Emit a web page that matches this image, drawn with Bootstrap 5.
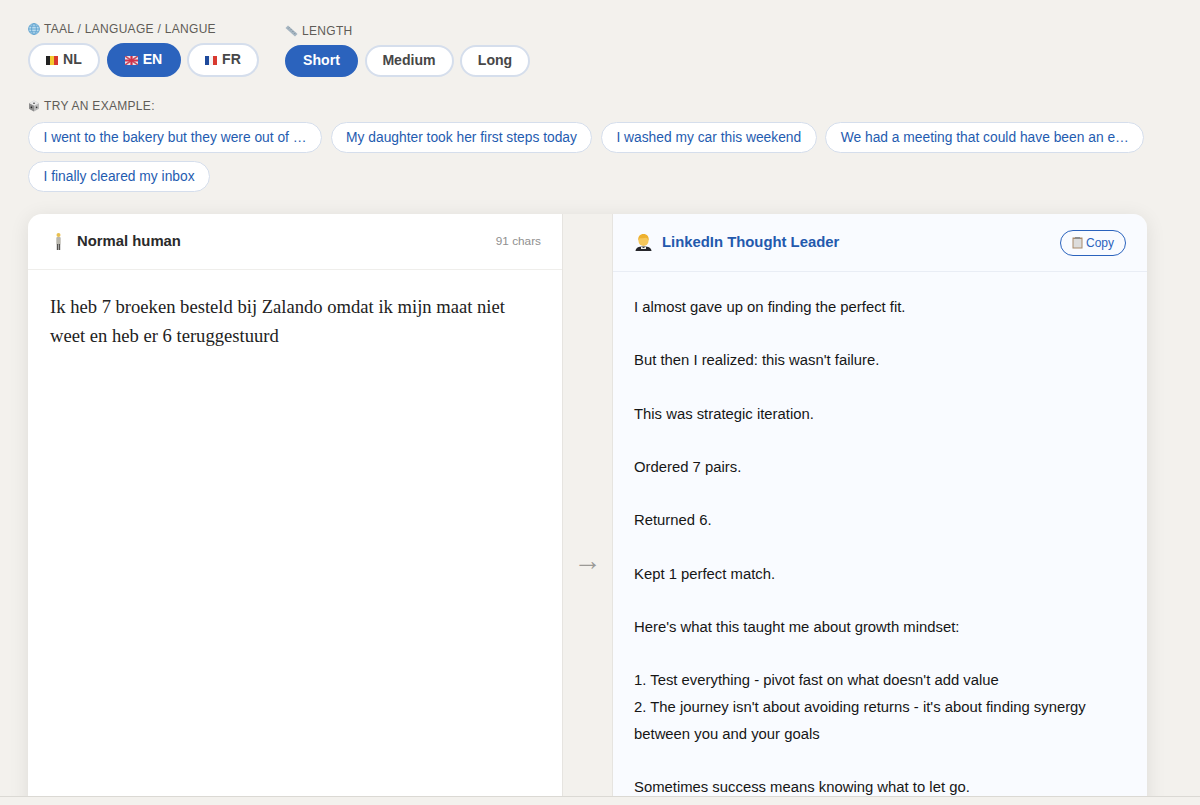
<!DOCTYPE html>
<html lang="en">
<head>
    <meta charset="UTF-8">
    <meta name="viewport" content="width=device-width, initial-scale=1.0">
    <title>LinkedIn Thought Leader</title>

    <link href="https://cdn.jsdelivr.net/npm/bootstrap@5.3.0/dist/css/bootstrap.min.css" rel="stylesheet">

    <style>
        html, body {
            height: 100%;
        }
        body {
            background-color: #f3f1ed;
            font-family: "Liberation Sans", Arial, sans-serif;
            color: #1a1a1a;
            overflow: hidden;
        }
        .page-shell {
            height: 805px;
        }
        .page-main {
            padding: 22px 52px 0 28px;
            min-height: 0;
            overflow: hidden;
        }
        .page-foot {
            height: 9px;
            flex: none;
            background: #f3f1ed;
            border-top: 1px solid #dbd9d4;
        }
        .group-label {
            font-size: 12px;
            line-height: 14px;
            letter-spacing: .3px;
            text-transform: uppercase;
            color: #5f5c57;
            margin-bottom: 7px;
            display: flex;
            align-items: center;
            gap: 4px;
        }
        .group-gap {
            gap: 26px;
        }
        .length-group {
            padding-top: 2px;
        }
        .pill-row {
            gap: 6.5px;
        }
        .pill {
            height: 34px;
            border-radius: 17px;
            border: 2px solid #d5deec;
            background: #fff;
            color: #474747;
            font-size: 14.1px;
            font-weight: 700;
            padding: 0;
            display: flex;
            align-items: center;
            justify-content: center;
            gap: 5px;
        }
        .pill.is-on {
            background: #2b63bd;
            border-color: #2b63bd;
            color: #fff;
        }
        .pill-short {
            height: 32px;
        }
        .w-nl { width: 72px; }
        .w-en { width: 74px; }
        .w-fr { width: 72px; }
        .w-short { width: 73px; }
        .w-medium { width: 89px; }
        .w-long { width: 70px; }
        .examples {
            margin-top: 22px;
        }
        .examples .group-label {
            margin-bottom: 9px;
        }
        .chip-row {
            gap: 8px 8.5px;
        }
        .chip {
            height: 31px;
            border-radius: 16px;
            border: 1.5px solid #d5deec;
            background: #fff;
            color: #1f5cb0;
            font-size: 13.8px;
            padding: 0 14.5px;
            white-space: nowrap;
            line-height: 1;
        }
        .panels {
            margin-top: 22px;
            width: 1119px;
            height: 640px;
            background: #f3f1ed;
            border-radius: 14px 14px 0 0;
            box-shadow: 0 3px 20px rgba(0, 0, 0, .09);
            overflow: hidden;
        }
        .panel-left {
            width: 534px;
            background: #fff;
        }
        .panel-right {
            width: 534px;
            background: #f9fbff;
        }
        .panel-gutter {
            width: 51px;
            flex: none;
            border-left: 1px solid #e6e4e0;
            border-right: 1px solid #e6e4e0;
            color: #9b9a96;
            font-size: 28px;
            padding-top: 333px;
            line-height: 28px;
        }
        .panel-head {
            padding: 0 21px;
            font-size: 14.85px;
            font-weight: 700;
        }
        .panel-left .panel-head {
            height: 56px;
            border-bottom: 1px solid #efeeeb;
            color: #2a2a2a;
        }
        .panel-right .panel-head {
            height: 58px;
            border-bottom: 1px solid #e9edf5;
            color: #2359ad;
        }
        .head-title {
            gap: 9px;
        }
        .char-count {
            font-size: 11.8px;
            font-weight: 400;
            color: #8f8f8f;
        }
        .copy-btn {
            width: 66px;
            height: 26px;
            border: 1px solid #2b63bd;
            border-radius: 13px;
            background: transparent;
            color: #2b63bd;
            font-size: 12px;
            padding: 0;
            gap: 3px;
        }
        .human-text {
            font-family: "Liberation Serif", "Times New Roman", serif;
            font-size: 18.6px;
            line-height: 29px;
            padding: 22px;
            color: #222;
        }
        .leader-text {
            font-size: 14.85px;
            line-height: 26.65px;
            padding: 22px 21px;
            color: #161616;
            white-space: pre-line;
        }
    </style>
</head>
<body>

<div class="page-shell d-flex flex-column">
    <div class="page-main flex-grow-1">

        <!-- Language and length -->
        <div class="d-flex group-gap">
            <div>
                <div class="group-label">
                    <svg width="12" height="12" viewBox="0 0 12 12" fill="none" stroke="#5fa3cf" stroke-width=".9"><circle cx="6" cy="6" r="5.4" fill="#bcdcef"/><ellipse cx="6" cy="6" rx="2.4" ry="5.4"/><path d="M.6 6h10.8M1.4 3.2h9.2M1.4 8.8h9.2"/></svg>
                    Taal / Language / Langue
                </div>
                <div class="d-flex pill-row">
                    <button class="pill w-nl">
                        <svg width="12" height="9" viewBox="0 0 12 9"><rect width="4" height="9" fill="#222"/><rect x="4" width="4" height="9" fill="#f3c92f"/><rect x="8" width="4" height="9" fill="#d8392f"/></svg>
                        NL
                    </button>
                    <button class="pill is-on w-en">
                        <svg width="13" height="9" viewBox="0 0 13 9"><rect width="13" height="9" fill="#e8e4ea"/><path d="M0 0l13 9M13 0L0 9" stroke="#c94a5f" stroke-width="1.6"/><path d="M6.500 0v9M0 4.500h13" stroke="#d2324c" stroke-width="2.200"/></svg>
                        EN
                    </button>
                    <button class="pill w-fr">
                        <svg width="12" height="9" viewBox="0 0 12 9"><rect width="4" height="9" fill="#1f4a9c"/><rect x="4" width="4" height="9" fill="#f4f4f4"/><rect x="8" width="4" height="9" fill="#d8392f"/></svg>
                        FR
                    </button>
                </div>
            </div>
            <div class="length-group">
                <div class="group-label">
                    <svg width="13" height="12" viewBox="0 0 13 12"><path d="M.5 3L3 .5l9.500 8.500-2.500 2.500z" fill="#a5b5c1"/><path d="M3.400 3.400l1-1M5.400 5.200l1-1M7.400 7l1-1M9.400 8.800l1-1" stroke="#6d7d88" stroke-width=".7"/></svg>
                    Length
                </div>
                <div class="d-flex pill-row">
                    <button class="pill pill-short is-on w-short">Short</button>
                    <button class="pill pill-short w-medium">Medium</button>
                    <button class="pill pill-short w-long">Long</button>
                </div>
            </div>
        </div>

        <!-- Examples -->
        <div class="examples">
            <div class="group-label">
                <svg width="12" height="12" viewBox="0 0 12 12"><path d="M6 .6l5 2.600v5.600L6 11.400 1 8.800V3.200z" fill="#b9b9b9"/><path d="M6 .6l5 2.600L6 5.800 1 3.200z" fill="#e9e9e9"/><path d="M6 5.800v5.600L1 8.800V3.200z" fill="#8d8d8d"/><circle cx="6" cy="3.200" r=".8" fill="#333"/><circle cx="3.400" cy="7.400" r=".8" fill="#222"/><circle cx="8.600" cy="7.400" r=".8" fill="#333"/></svg>
                Try an example:
            </div>
            <div class="d-flex flex-wrap chip-row">
                <button class="chip">I went to the bakery but they were out of …</button>
                <button class="chip">My daughter took her first steps today</button>
                <button class="chip">I washed my car this weekend</button>
                <button class="chip">We had a meeting that could have been an e…</button>
                <button class="chip">I finally cleared my inbox</button>
            </div>
        </div>

        <!-- Panels -->
        <div class="panels d-flex">
            <div class="panel-left flex-shrink-0">
                <div class="panel-head d-flex align-items-center justify-content-between">
                    <div class="d-flex align-items-center head-title">
                        <svg width="19" height="19" viewBox="0 0 19 19"><circle cx="9.500" cy="3" r="2" fill="#e9c04f"/><rect x="7.300" y="5" width="4.400" height="7.500" rx="1" fill="#b9b7ae"/><rect x="7.800" y="12" width="1.500" height="6" fill="#55534f"/><rect x="9.700" y="12" width="1.500" height="6" fill="#55534f"/></svg>
                        Normal human
                    </div>
                    <span class="char-count">91 chars</span>
                </div>
                <div class="human-text">Ik heb 7 broeken besteld bij Zalando omdat ik mijn maat niet weet en heb er 6 teruggestuurd</div>
            </div>
            <div class="panel-gutter text-center">&#8594;</div>
            <div class="panel-right flex-shrink-0">
                <div class="panel-head d-flex align-items-center justify-content-between">
                    <div class="d-flex align-items-center head-title">
                        <svg width="19" height="19" viewBox="0 0 19 19"><path d="M1.500 18c.3-3.400 2.600-4.600 8-4.600s7.700 1.200 8 4.600z" fill="#26262b"/><path d="M7 13.500l2.500 1.500 2.500-1.500v2.500H7z" fill="#f1eee8"/><circle cx="9.500" cy="8" r="5" fill="#f6c75a"/><path d="M4.200 8C3.800 3.500 6 1 9.500 1s5.700 2.500 5.300 7c-.6-2-1.800-3-3.100-3.300-2 .7-4.800.5-5.800.6C5 6 4.500 7 4.200 8z" fill="#eeb12f"/></svg>
                        LinkedIn Thought Leader
                    </div>
                    <button class="copy-btn d-flex align-items-center justify-content-center">
                        <svg width="11" height="12" viewBox="0 0 11 12"><rect x=".5" y=".5" width="10" height="11" fill="#a98a6a"/><rect x="1.500" y="2" width="8" height="8.500" fill="#dcdcdc"/><rect x="3" y="0" width="5" height="2" fill="#8d8d8d"/></svg>
                        Copy
                    </button>
                </div>
                <div class="leader-text">I almost gave up on finding the perfect fit.

But then I realized: this wasn't failure.

This was strategic iteration.

Ordered 7 pairs.

Returned 6.

Kept 1 perfect match.

Here's what this taught me about growth mindset:

1. Test everything - pivot fast on what doesn't add value
2. The journey isn't about avoiding returns - it's about finding synergy between you and your goals

Sometimes success means knowing what to let go.</div>
            </div>
        </div>

    </div>
    <div class="page-foot"></div>
</div>

<script src="https://cdn.jsdelivr.net/npm/bootstrap@5.3.0/dist/js/bootstrap.bundle.min.js"></script>
</body>
</html>
